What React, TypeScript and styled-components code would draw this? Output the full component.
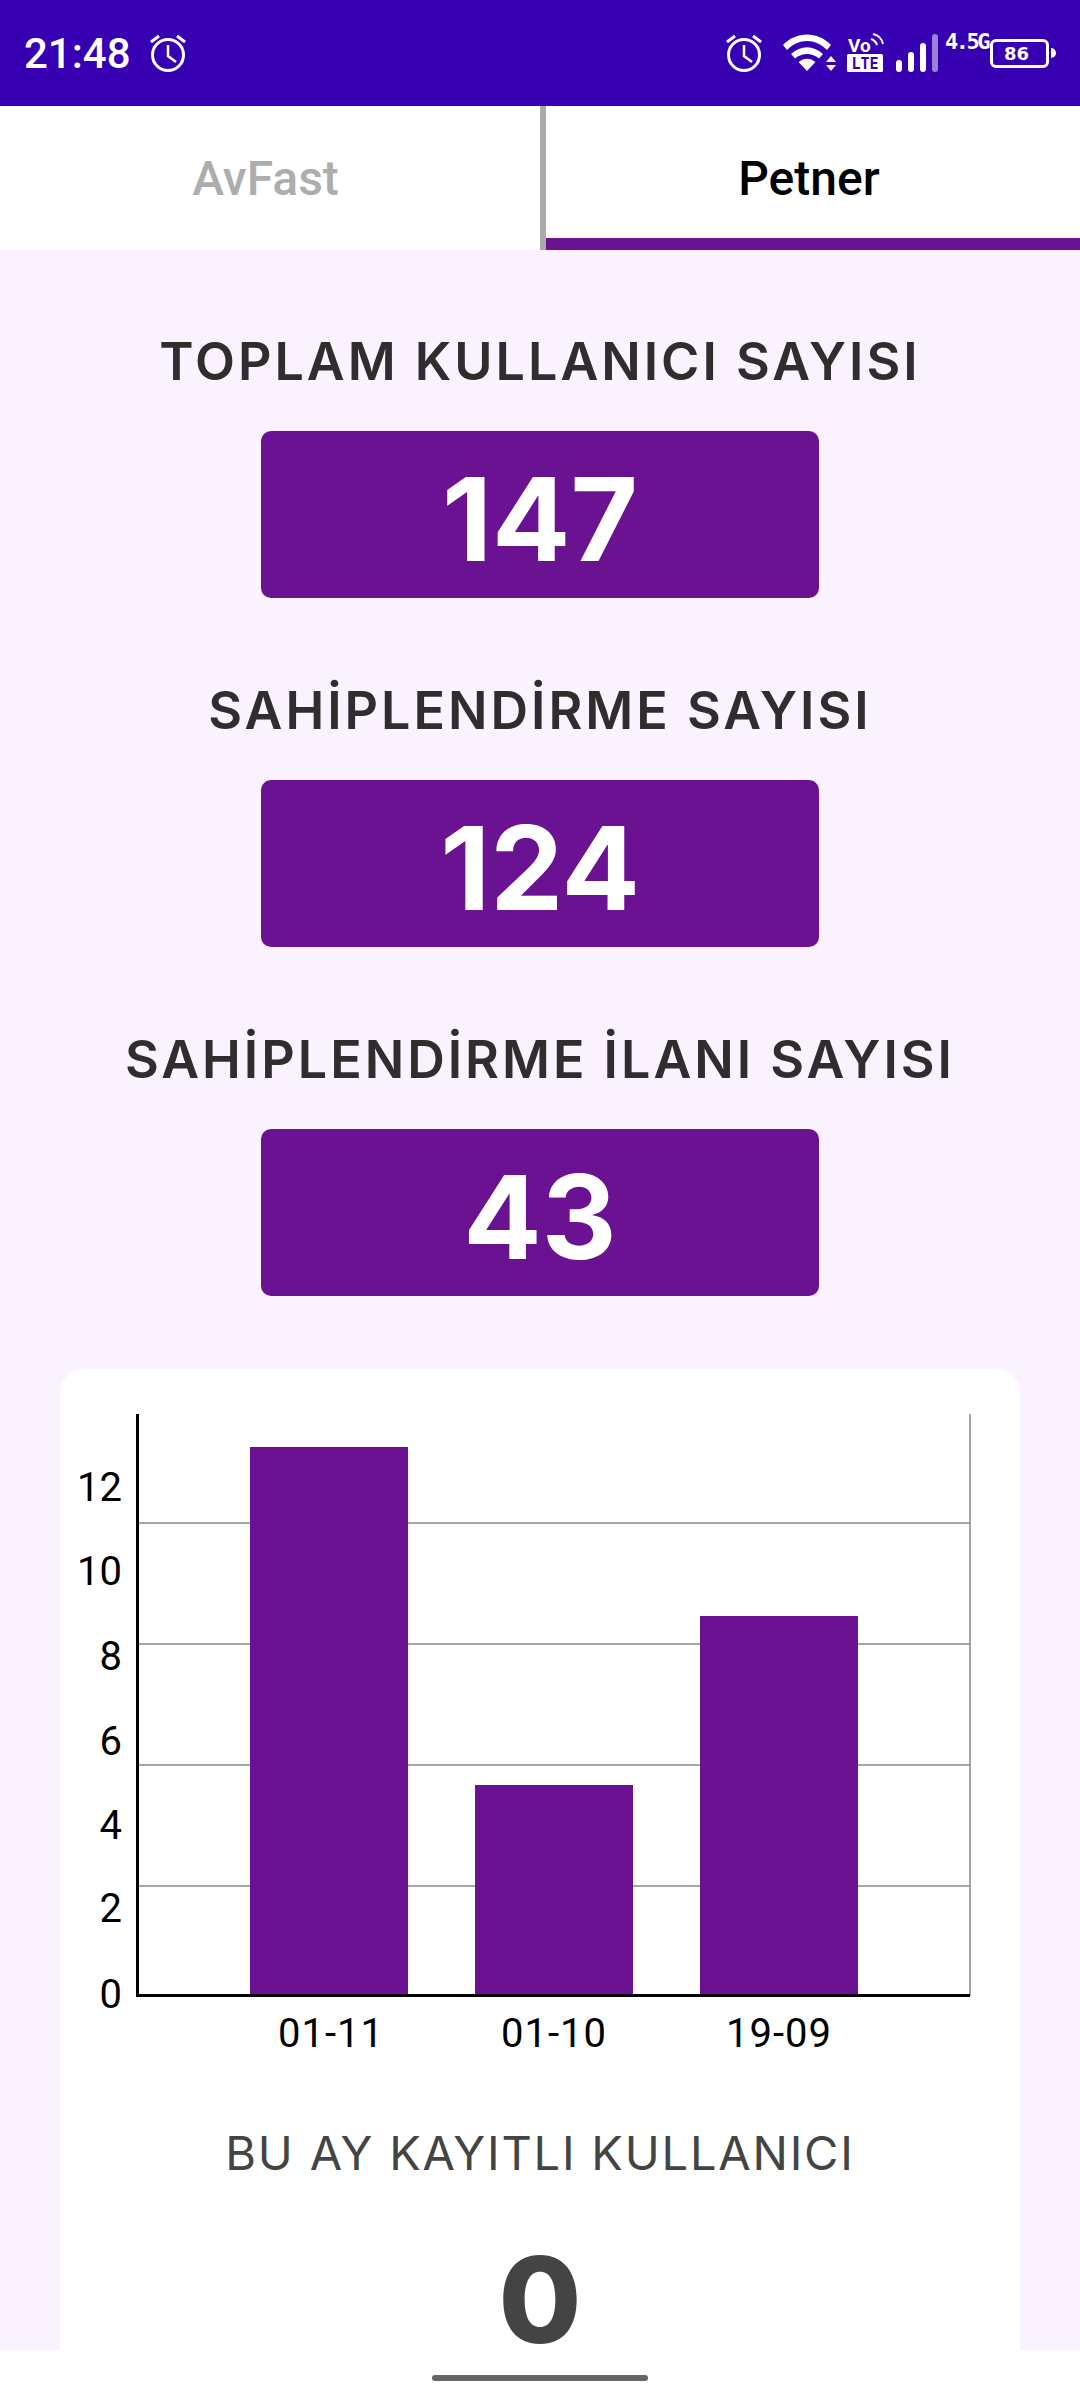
import React from 'react';
import styled, { createGlobalStyle } from 'styled-components';

const stats = [
  { label: 'TOPLAM KULLANICI SAYISI', value: '147' },
  { label: 'SAHİPLENDİRME SAYISI', value: '124' },
  { label: 'SAHİPLENDİRME İLANI SAYISI', value: '43' },
];

const gridLines = [154, 275, 396, 517];
const ticks = [
  { label: '12', y: 132 },
  { label: '10', y: 216 },
  { label: '8', y: 301 },
  { label: '6', y: 386 },
  { label: '4', y: 470 },
  { label: '2', y: 553 },
  { label: '0', y: 639 },
];
const bars = [
  { label: '01-11', x: 190, top: 78, textX: 271 },
  { label: '01-10', x: 415, top: 416, textX: 494 },
  { label: '19-09', x: 640, top: 247, textX: 719 },
];

const AlarmIcon: React.FC = () => (
  <svg width="40" height="40" viewBox="0 0 40 40" fill="none" stroke="#fff" strokeWidth="3">
    <circle cx="20" cy="22" r="15.5" />
    <path d="M20 12v11l8 6" strokeWidth="2.5" />
    <path d="M3 9l8-6M37 9l-8-6" />
  </svg>
);

const WifiIcon: React.FC = () => (
  <svg width="54" height="40" viewBox="0 0 54 40" fill="#fff">
    <path d="M0 12C13-2 35-2 48 12l-4 5C32 5 16 5 4 17z" />
    <path d="M8 21c10-9 22-9 32 0l-4 4.500c-7-6-17-6-24 0z" />
    <path d="M15.500 29c5.500-4.500 11.500-4.500 17 0L24 38z" />
    <path d="M48 23l5 6H43zM43 32h10l-5 6z" />
  </svg>
);

const VolteIcon: React.FC = () => (
  <svg width="38" height="40" viewBox="0 0 38 40">
    <text x="2" y="19" fontFamily="Roboto, sans-serif" fontSize="19" fontWeight="700" fill="#fff">
      Vo
    </text>
    <path d="M25 6c3 1 5 3 6 6M27 1c5 1 9 5 10 10" fill="none" stroke="#fff" strokeWidth="2" />
    <rect x="1" y="21" width="36" height="18" rx="1.500" fill="#fff" />
    <text x="19" y="36" textAnchor="middle" fontFamily="'DejaVu Sans Mono', monospace" fontSize="15" fontWeight="700" fill="#3700b3">
      LTE
    </text>
  </svg>
);

const SignalIcon: React.FC = () => (
  <svg width="44" height="40" viewBox="0 0 44 40">
    <rect x="1" y="27" width="6" height="12" rx="3" fill="#fff" />
    <rect x="13" y="19" width="6" height="20" rx="3" fill="#fff" />
    <rect x="25" y="10" width="6" height="29" rx="3" fill="#fff" />
    <rect x="37" y="1" width="6" height="38" rx="3" fill="#9b82d9" />
  </svg>
);

const App: React.FC = () => (
  <Screen>
    <GlobalStyle />
    <StatusBar>
      <StatusLeft>
        <Clock>21:48</Clock>
        <AlarmIcon />
      </StatusLeft>
      <StatusRight>
        <IconSlot $gap={0}>
          <AlarmIcon />
        </IconSlot>
        <IconSlot $gap={19}>
          <WifiIcon />
        </IconSlot>
        <IconSlot $gap={9}>
          <VolteIcon />
        </IconSlot>
        <IconSlot $gap={11}>
          <SignalIcon />
        </IconSlot>
        <NetworkType>4.5G</NetworkType>
        <Battery>
          <BatteryBody>86</BatteryBody>
          <BatteryTip />
        </Battery>
      </StatusRight>
    </StatusBar>

    <Tabs>
      <LeftTab>AvFast</LeftTab>
      <RightTab>Petner</RightTab>
    </Tabs>

    <Content>
      {stats.map((stat) => (
        <Stat key={stat.label}>
          <StatLabel>{stat.label}</StatLabel>
          <StatBox>{stat.value}</StatBox>
        </Stat>
      ))}

      <Card>
        <Chart width="960" height="720" viewBox="0 0 960 720">
          {gridLines.map((y) => (
            <line key={y} x1="78" x2="910" y1={y} y2={y} stroke="#8a8a8a" strokeWidth="1.500" />
          ))}
          <line x1="910" x2="910" y1="45" y2="627" stroke="#8a8a8a" strokeWidth="1.500" />
          {bars.map((bar) => (
            <rect key={bar.label} x={bar.x} y={bar.top} width="158" height={626 - bar.top} fill="#6a1291" />
          ))}
          <line x1="77.500" x2="77.500" y1="45" y2="628" stroke="#000" strokeWidth="3" />
          <line x1="76" x2="910" y1="626.500" y2="626.500" stroke="#000" strokeWidth="3" />
          {ticks.map((tick) => (
            <ChartText key={tick.label} x="62" y={tick.y} textAnchor="end">
              {tick.label}
            </ChartText>
          ))}
          {bars.map((bar) => (
            <AxisLabel key={bar.label} x={bar.textX} y="678" textAnchor="middle">
              {bar.label}
            </AxisLabel>
          ))}
        </Chart>
        <CardTitle>BU AY KAYITLI KULLANICI</CardTitle>
        <CardValue>0</CardValue>
      </Card>
    </Content>

    <NavBar>
      <NavPill />
    </NavBar>
  </Screen>
);

export default App;

const GlobalStyle = createGlobalStyle`
  html, body {
    margin: 0;
    padding: 0;
  }
`;

const Screen = styled.div`
  width: 1080px;
  height: 2400px;
  display: flex;
  flex-direction: column;
  overflow: hidden;
  background: #fff;
  font-family: Roboto, sans-serif;
`;

const StatusBar = styled.div`
  height: 106px;
  flex-shrink: 0;
  display: flex;
  align-items: center;
  justify-content: space-between;
  padding: 0 24px;
  box-sizing: border-box;
  background: #3700b3;
  color: #fff;
`;

const StatusLeft = styled.div`
  display: flex;
  align-items: center;
  gap: 17px;
`;

const Clock = styled.span`
  font-size: 42px;
  font-weight: 500;
`;

const StatusRight = styled.div`
  display: flex;
  align-items: center;
`;

const IconSlot = styled.div<{ $gap: number }>`
  display: flex;
  margin-left: ${(p) => p.$gap}px;
`;

const NetworkType = styled.span`
  align-self: flex-start;
  width: 45px;
  margin-left: 6px;
  margin-top: -3px;
  font-family: 'DejaVu Sans Mono', monospace;
  font-size: 22px;
  line-height: 24px;
  font-weight: 700;
  letter-spacing: -2.500px;
`;

const Battery = styled.div`
  display: flex;
  align-items: center;
  gap: 2px;
`;

const BatteryBody = styled.div`
  width: 59px;
  height: 29px;
  box-sizing: border-box;
  border: 3px solid #fff;
  border-radius: 6px;
  display: flex;
  align-items: center;
  justify-content: center;
  padding-right: 6px;
  font-family: 'DejaVu Sans', sans-serif;
  font-size: 18px;
  font-weight: 700;
`;

const BatteryTip = styled.div`
  width: 5px;
  height: 10px;
  background: #fff;
  border-radius: 0 5px 5px 0;
`;

const Tabs = styled.div`
  height: 144px;
  flex-shrink: 0;
  display: flex;
`;

const Tab = styled.div`
  display: flex;
  align-items: center;
  justify-content: center;
  box-sizing: border-box;
  font-size: 48px;
  font-weight: 500;
`;

const LeftTab = styled(Tab)`
  width: 546px;
  padding-right: 9px;
  border-right: 6px solid #aaa;
  color: #adadad;
`;

const RightTab = styled(Tab)`
  flex: 1;
  padding-top: 12px;
  padding-right: 8px;
  border-bottom: 12px solid #6a1291;
  color: #000;
`;

const Content = styled.div`
  flex: 1;
  min-height: 0;
  padding: 80px 60px 0;
  display: flex;
  flex-direction: column;
  background: #faf2fe;
`;

const Stat = styled.div`
  display: flex;
  flex-direction: column;
  align-items: center;
  margin-bottom: 81px;
  &:nth-child(3) {
    margin-bottom: 73px;
  }
`;

const StatLabel = styled.div`
  height: 60px;
  margin-top: 2px;
  margin-bottom: 39px;
  font-family: Inter, sans-serif;
  font-size: 52px;
  line-height: 60px;
  font-weight: 600;
  letter-spacing: 3px;
  color: #2f2d2e;
  white-space: nowrap;
`;

const StatBox = styled.div`
  width: 558px;
  height: 167px;
  padding-top: 8px;
  box-sizing: border-box;
  display: flex;
  align-items: center;
  justify-content: center;
  border-radius: 10px;
  background: #6a1291;
  color: #fff;
  font-family: Inter, sans-serif;
  font-size: 116px;
  font-weight: 700;
`;

const Card = styled.div`
  flex-shrink: 0;
  height: 1100px;
  display: flex;
  flex-direction: column;
  align-items: center;
  border-radius: 24px;
  background: #fff;
`;

const Chart = styled.svg`
  display: block;
  margin-bottom: 34px;
`;

const ChartText = styled.text`
  font-family: Roboto, sans-serif;
  font-size: 40px;
  fill: #000;
`;

const AxisLabel = styled(ChartText)`
  letter-spacing: 1px;
`;

const CardTitle = styled.div`
  height: 60px;
  margin-bottom: 47px;
  font-family: Inter, sans-serif;
  font-size: 47px;
  line-height: 60px;
  font-weight: 400;
  letter-spacing: 1.800px;
  color: #444;
  white-space: nowrap;
`;

const CardValue = styled.div`
  font-family: Inter, sans-serif;
  font-size: 120px;
  line-height: 140px;
  font-weight: 800;
  color: #444;
`;

const NavBar = styled.div`
  height: 50px;
  flex-shrink: 0;
  position: relative;
  z-index: 1;
  display: flex;
  justify-content: center;
  padding-top: 25px;
  box-sizing: border-box;
  background: #fff;
`;

const NavPill = styled.div`
  width: 216px;
  height: 6px;
  border-radius: 3px;
  background: #666;
`;
